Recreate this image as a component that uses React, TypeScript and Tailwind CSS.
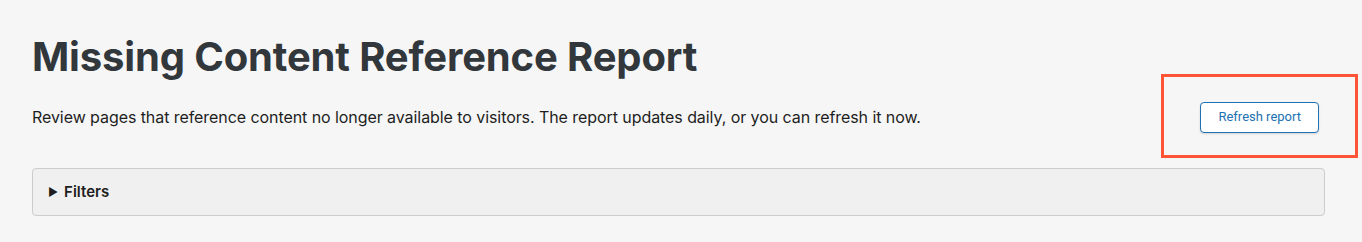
import React from "react";

export default function App() {
  return (
    <div className="w-[1362px] h-[242px] bg-[#f6f6f6] overflow-hidden" style={{ fontFamily: "Inter, 'Noto Sans', sans-serif" }}>
      <div className="pl-[32px] pr-[37px] pt-[33px]">
        <h1 className="text-[40px] leading-[48px] font-bold text-[#32373c] tracking-[-0.15px]">Missing Content Reference Report</h1>
        <div className="flex items-center justify-between mt-[20px] h-[32px]">
          <p className="text-[16px] text-[#1e1e1e] tracking-[-0.07px]">
            Review pages that reference content no longer available to visitors. The report updates daily, or you can refresh it now.
          </p>
          <div className="relative mr-[6px]">
            <button className="h-[31px] px-[17px] rounded-[4px] border border-[#2271b1] bg-white text-[#2271b1] text-[13px] shadow-[0_1px_2px_rgba(0,0,0,0.15)]" style={{ fontFamily: "Roboto, 'Liberation Sans', sans-serif" }}>
              Refresh report
            </button>
            <div className="absolute left-[-39px] right-[-39px] top-[-28px] bottom-[-25px] border-[3px] border-[#ff5436] pointer-events-none" />
          </div>
        </div>
        <div className="mt-[35px] h-[48px] rounded-[4px] border border-[#cccccc] bg-[#f0f0f0] flex items-center pl-[15px]">
          <span className="text-[11px] text-[#1e1e1e] mr-[6px]">▶</span>
          <span className="text-[15px] font-semibold text-[#1e1e1e]">Filters</span>
        </div>
      </div>
    </div>
  );
}
